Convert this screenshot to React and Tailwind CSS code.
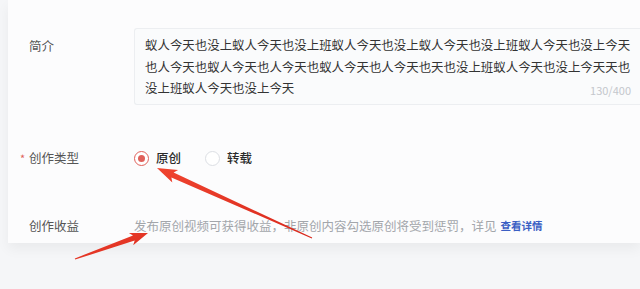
import React from 'react';

const lines = [
  '蚁人今天也没上蚁人今天也没上班蚁人今天也没上蚁人今天也没上班蚁人今天也没上今天',
  '也人今天也蚁人今天也人今天也蚁人今天也人今天也天也没上班蚁人今天也没上今天天也',
  '没上班蚁人今天也没上今天',
];

// tapered callout arrow from tail to tip
function arrowPoints([tx, ty], [px, py], head = 17, wing = 7) {
  const dx = px - tx;
  const dy = py - ty;
  const len = Math.hypot(dx, dy);
  const ux = dx / len;
  const uy = dy / len;
  const nx = -uy;
  const ny = ux;
  const neckX = px - ux * head;
  const neckY = py - uy * head;
  const barbX = px - ux * (head + 3);
  const barbY = py - uy * (head + 3);
  const pts = [
    [tx + nx * 0.6, ty + ny * 0.6],
    [neckX + nx * 2.6, neckY + ny * 2.6],
    [barbX + nx * wing, barbY + ny * wing],
    [px, py],
    [barbX - nx * wing, barbY - ny * wing],
    [neckX - nx * 2.6, neckY - ny * 2.6],
    [tx - nx * 0.6, ty - ny * 0.6],
  ];
  return pts.map((p) => p.map((v) => v.toFixed(1)).join(',')).join(' ');
}

const Radio = ({ checked, label }) => (
  <label className="flex items-center gap-[7px]">
    <span
      className={`w-[15px] h-[15px] rounded-full border flex items-center justify-center bg-white ${
        checked ? 'border-[#e0605a]' : 'border-[#dcdfe4]'
      }`}
    >
      {checked && <span className="w-[7px] h-[7px] rounded-full bg-[#e0605a]" />}
    </span>
    <span className="text-[12.5px] text-[#2b2b2b] font-medium">{label}</span>
  </label>
);

export default function App() {
  return (
    <div
      className="relative w-[640px] h-[289px] overflow-hidden bg-[#f5f6f8]"
      style={{ fontFamily: '"Noto Sans CJK SC", "Noto Sans", sans-serif' }}
    >
      {/* form panel */}
      <div className="h-[243px] bg-[#fcfcfd] ml-[8px] shadow-[0_6px_12px_rgba(0,0,0,0.05)] pt-[28px]">
        {/* 简介 */}
        <div className="flex">
          <div className="w-[126px] pl-[21px] pt-[9px] text-[12.5px] text-[#555]">简介</div>
          <div className="flex-1 h-[77px] border border-[#eceef1] border-r-0 rounded-l-[3px] bg-[#fafbfc] pl-[10px] pt-[6px] relative">
            {lines.map((l) => (
              <div key={l} className="whitespace-nowrap text-[12.45px] leading-[21.5px] text-[#333]">
                {l}
              </div>
            ))}
            <div className="absolute right-[9px] bottom-[6px] text-[11px] text-[#c4c7cc]">130/400</div>
          </div>
        </div>

        {/* 创作类型 */}
        <div className="flex items-center mt-[43px] h-[20px]">
          <div className="w-[126px] pl-[12px] text-[12.5px] text-[#555] flex items-center">
            <span className="text-[#e0605a] text-[11px] w-[9px]">*</span>
            创作类型
          </div>
          <div className="flex items-center gap-[24px]">
            <Radio checked label="原创" />
            <Radio label="转载" />
          </div>
        </div>

        {/* 创作收益 */}
        <div className="flex items-center mt-[48px] h-[20px]">
          <div className="w-[126px] pl-[21px] text-[12.5px] text-[#555]">创作收益</div>
          <div className="text-[12.5px] text-[#a3a6ab] whitespace-nowrap flex items-center">
            发布原创视频可获得收益，非原创内容勾选原创将受到惩罚，详见
            <span className="ml-[4px] text-[10.5px] text-[#3b5fc4] font-bold">查看详情</span>
          </div>
        </div>
      </div>

      {/* red callout arrows */}
      <svg className="absolute inset-0 pointer-events-none" width="640" height="289">
        <defs>
          <linearGradient id="ar" x1="0" y1="0" x2="1" y2="1">
            <stop offset="0" stopColor="#f0442f" />
            <stop offset="1" stopColor="#d8281c" />
          </linearGradient>
        </defs>
        <polygon points={arrowPoints([312, 238], [157, 168])} fill="url(#ar)" />
        <polygon points={arrowPoints([75, 259], [148, 233], 15, 6.5)} fill="url(#ar)" />
      </svg>
    </div>
  );
}
